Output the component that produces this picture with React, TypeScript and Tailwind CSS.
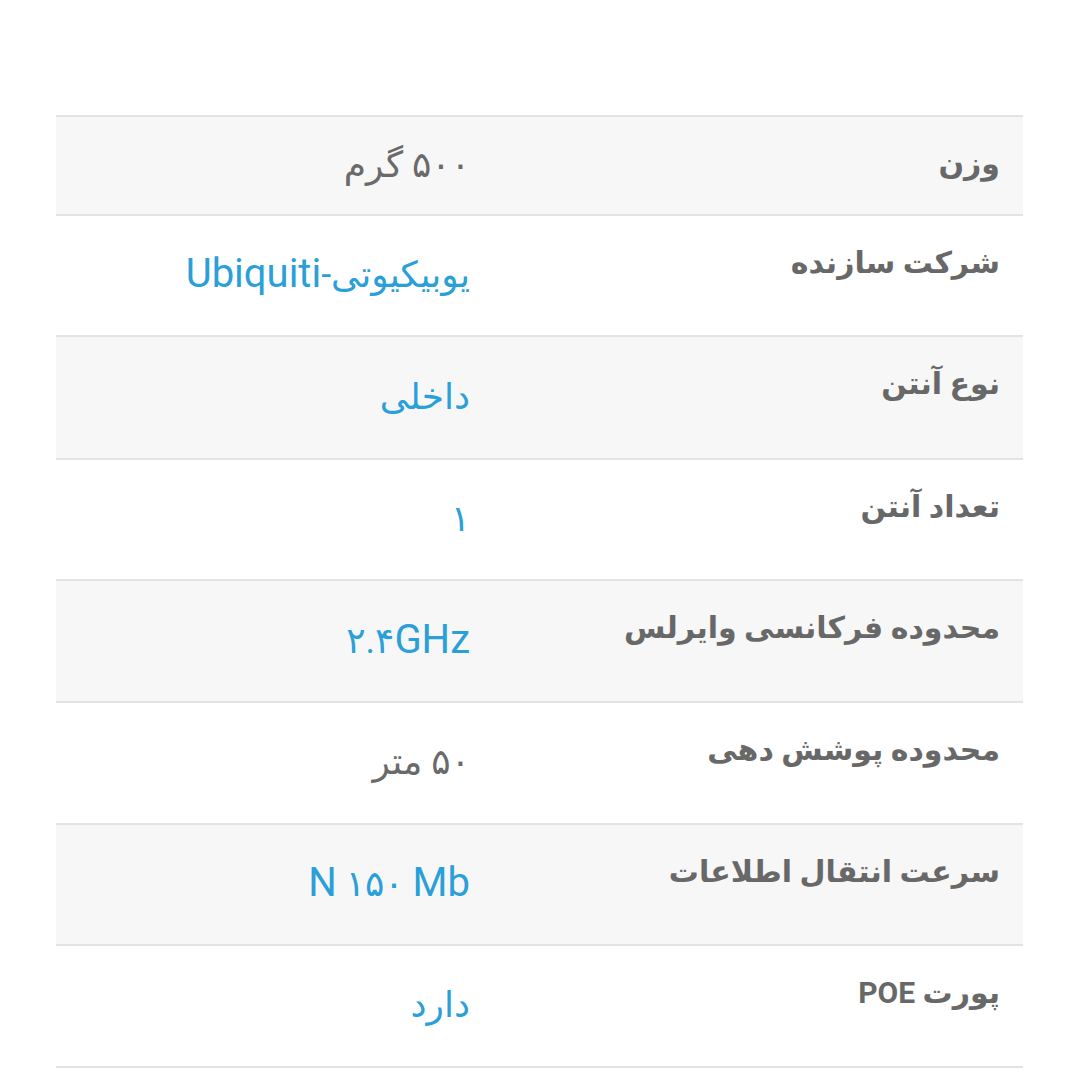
import type { ReactNode } from "react";

const L = ({ children }: { children: ReactNode }) => (
  <span className="text-[40px]">{children}</span>
);

const rows: { label: ReactNode; value: ReactNode; link?: boolean; h: string }[] = [
  { label: "وزن", value: "۵۰۰ گرم", h: "h-[99px]" },
  { label: "شرکت سازنده", value: <>یوبیکیوتی-<L>Ubiquiti</L></>, link: true, h: "h-[121px]" },
  { label: "نوع آنتن", value: "داخلی", link: true, h: "h-[123px]" },
  { label: "تعداد آنتن", value: "۱", link: true, h: "h-[121px]" },
  { label: "محدوده فرکانسی وایرلس", value: <>۲.۴<L>GHz</L></>, link: true, h: "h-[122px]" },
  { label: "محدوده پوشش دهی", value: "۵۰ متر", h: "h-[122px]" },
  { label: "سرعت انتقال اطلاعات", value: <><L>N</L> ۱۵۰ <L>Mb</L></>, link: true, h: "h-[121px]" },
  { label: "پورت POE", value: "دارد", link: true, h: "h-[122px]" },
];

export default function App() {
  return (
    <div className="min-h-screen bg-white pt-[115px] pl-[56px] pr-[57px] font-['Roboto','DejaVu_Sans',sans-serif]">
      <div dir="rtl" className="border-b-2 border-[#e3e3e3]">
        {rows.map((r, i) => (
          <div
            key={i}
            className={`flex border-t-2 border-[#e3e3e3] ${r.h} ${
              i % 2 === 0 ? "bg-[#f7f7f7]" : "bg-white"
            }`}
          >
            <div className="w-[530px] shrink-0 pr-[23px] pt-[24px] text-[30px] leading-[46px] font-bold text-[#686868]">
              {r.label}
            </div>
            <div
              className={`flex flex-1 items-center pr-[23px] pb-[2px] text-[36px] leading-[48px] ${
                r.link ? "text-[#2a9fd8]" : "text-[#6a6a6a]"
              }`}
            >
              <span>{r.value}</span>
            </div>
          </div>
        ))}
      </div>
    </div>
  );
}
